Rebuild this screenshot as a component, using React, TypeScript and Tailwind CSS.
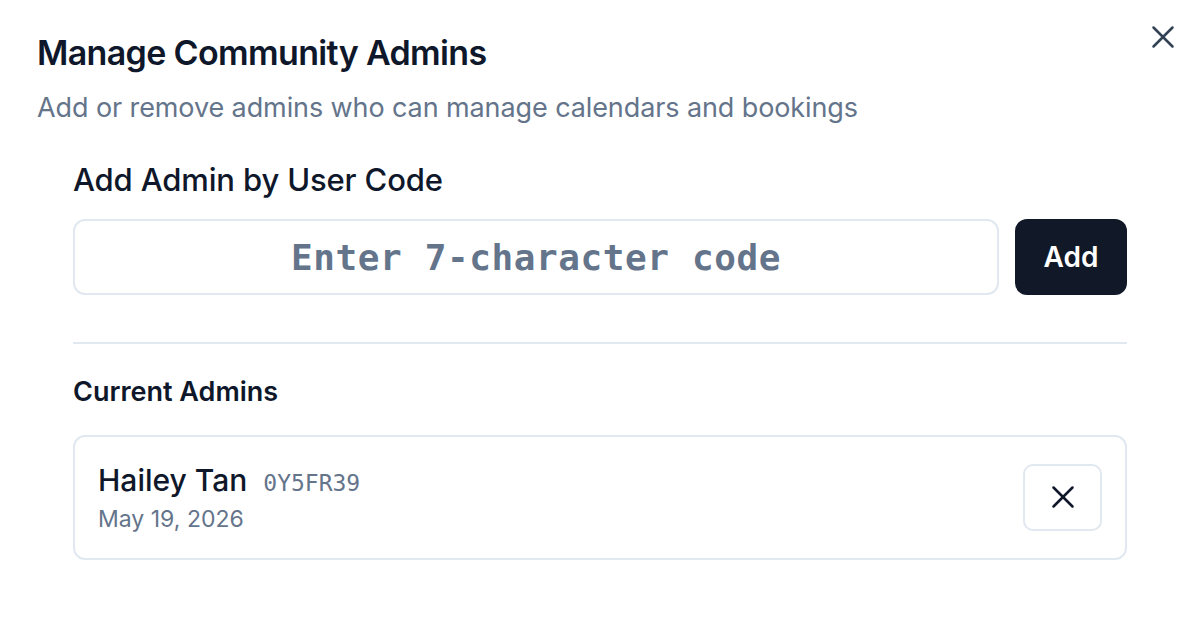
import { X } from "lucide-react";

const admins = [{ name: "Hailey Tan", code: "0Y5FR39", date: "May 19, 2026" }];

export default function App() {
  return (
    <div className="relative h-[623px] w-full bg-white font-['Inter',sans-serif] text-[#0f172a]">
      <button className="absolute right-[18px] top-[18px] text-[#334155]">
        <X size={38} strokeWidth={1.6} />
      </button>

      <div className="px-[37px] pt-[35px]">
        <h2 className="text-[34px] leading-[36px] font-semibold tracking-[-0.65px]">Manage Community Admins</h2>
        <p className="mt-[17px] text-[27px] leading-[40px] tracking-[-0.1px] text-[#64748b]">
          Add or remove admins who can manage calendars and bookings
        </p>

        <div className="mx-[36px] mt-[28px]">
          <label className="block text-[31px] leading-[48px] font-medium tracking-[-0.15px]">Add Admin by User Code</label>
          <div className="mt-[15px] flex gap-[16px]">
            <input
              type="text"
              placeholder="Enter 7-character code"
              className="h-[76px] flex-1 rounded-[12px] border-2 border-[#e2e8f0] bg-white px-4 text-center font-['DejaVu_Sans_Mono',monospace] text-[36px] font-bold tracking-[0.6px] placeholder:text-[#64748b] outline-none"
            />
            <button className="h-[76px] w-[112px] rounded-[12px] bg-[#111827] text-[28px] font-semibold text-white">
              Add
            </button>
          </div>

          <div className="mt-[47px] h-[2px] bg-[#e2e8f0]" />

          <h3 className="mt-[28px] text-[27px] leading-[40px] font-semibold">Current Admins</h3>

          <div className="mt-[23px] flex flex-col gap-3">
            {admins.map((a) => (
              <div
                key={a.code}
                className="flex items-center justify-between rounded-[12px] border-2 border-[#e2e8f0] px-[23px] py-[23px]"
              >
                <div>
                  <div className="flex items-baseline gap-[16px]">
                    <span className="text-[30px] leading-[40px] font-medium">{a.name}</span>
                    <span className="font-['DejaVu_Sans_Mono',monospace] text-[23px] text-[#64748b]">{a.code}</span>
                  </div>
                  <div className="mt-[2px] text-[23px] leading-[32px] text-[#64748b]">{a.date}</div>
                </div>
                <button className="flex h-[67px] w-[79px] items-center justify-center rounded-[10px] border-2 border-[#e2e8f0] text-[#0f172a]">
                  <X size={38} strokeWidth={1.6} />
                </button>
              </div>
            ))}
          </div>
        </div>
      </div>
    </div>
  );
}
